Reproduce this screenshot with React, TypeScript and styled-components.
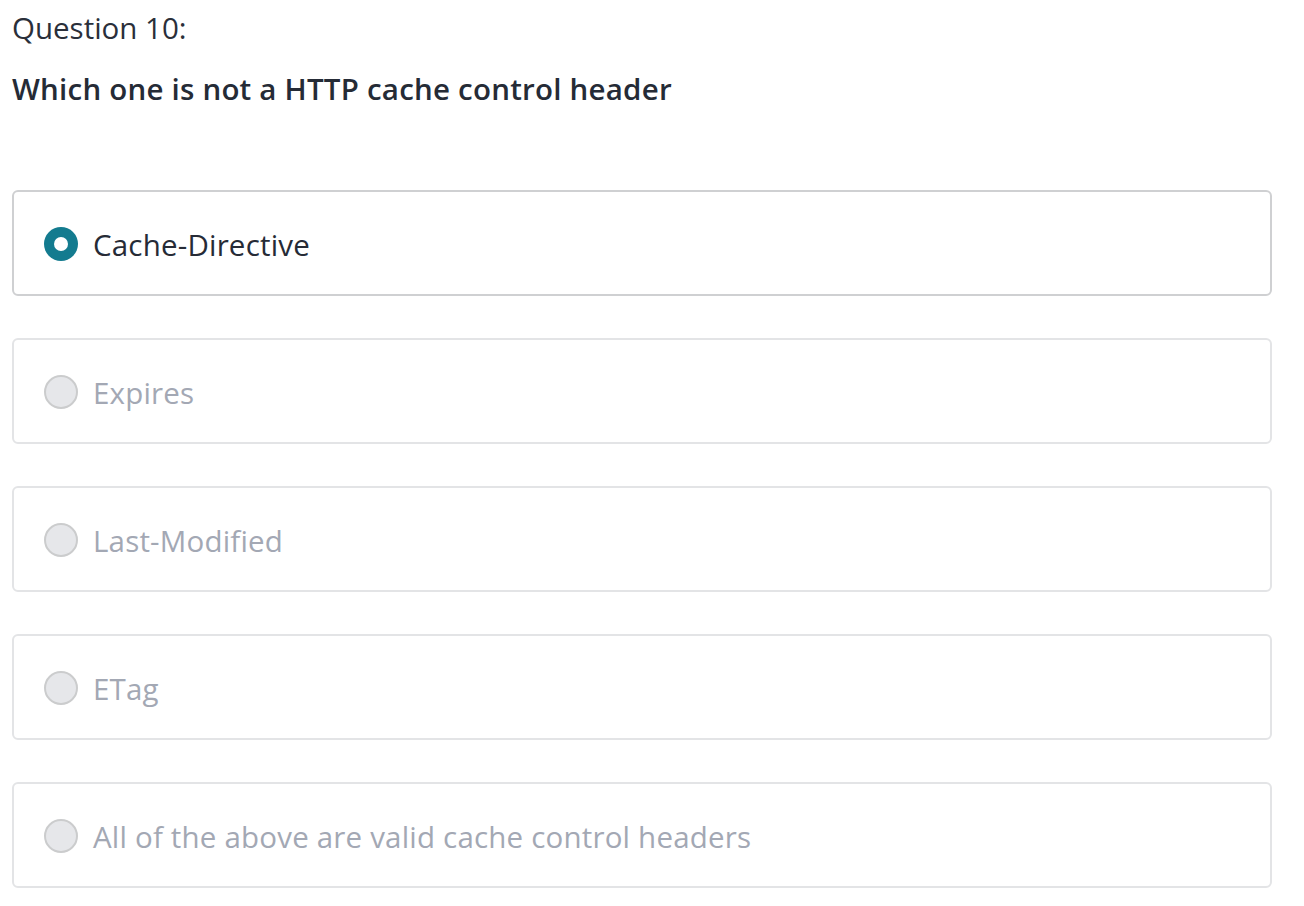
import React from "react";
import styled, { createGlobalStyle } from "styled-components";

const GlobalStyle = createGlobalStyle`
  html, body { margin: 0; padding: 0; background: #ffffff; }
  body { font-family: "Open Sans", "Noto Sans", sans-serif; }
`;

const Page = styled.div`
  width: 1260px;
  padding: 8px 0 0 12px;
  display: flex;
  flex-direction: column;
`;

const Title = styled.div`
  font-size: 29.5px;
  line-height: 40px;
  color: #2a2f3a;
  font-weight: 400;
`;

const Prompt = styled.div`
  margin-top: 21px;
  font-size: 29.5px;
  line-height: 40px;
  color: #252b36;
  font-weight: 600;
  letter-spacing: 0.22px;
`;

const Options = styled.div`
  margin-top: 81px;
  display: flex;
  flex-direction: column;
  gap: 42px;
`;

const Card = styled.label<{ $selected: boolean }>`
  box-sizing: border-box;
  height: 106px;
  border: 2px solid ${(p) => (p.$selected ? "#cfd0d2" : "#e3e4e6")};
  border-radius: 6px;
  display: flex;
  align-items: center;
  gap: 15px;
  padding: 2px 0 0 30px;
  cursor: pointer;
`;

const Radio = styled.span<{ $selected: boolean }>`
  box-sizing: border-box;
  width: 34px;
  height: 34px;
  border-radius: 50%;
  flex: none;
  display: flex;
  align-items: center;
  justify-content: center;
  background: ${(p) => (p.$selected ? "#137b8f" : "#e6e7ea")};
  border: ${(p) => (p.$selected ? "none" : "2px solid #cbcccd")};
`;

const Dot = styled.span`
  width: 14px;
  height: 14px;
  border-radius: 50%;
  background: #ffffff;
`;

const OptionText = styled.span<{ $selected: boolean }>`
  font-size: 29.5px;
  line-height: 40px;
  letter-spacing: 0.19px;
  color: ${(p) => (p.$selected ? "#262b36" : "#a3a8b4")};
  padding-top: 1px;
`;

const options = [
  "Cache-Directive",
  "Expires",
  "Last-Modified",
  "ETag",
  "All of the above are valid cache control headers",
];

export default function App() {
  const selected = 0;
  return (
    <>
      <GlobalStyle />
      <Page>
        <Title>Question 10:</Title>
        <Prompt>Which one is not a HTTP cache control header</Prompt>
        <Options>
          {options.map((o, i) => (
            <Card key={o} $selected={i === selected}>
              <Radio $selected={i === selected}>{i === selected && <Dot />}</Radio>
              <OptionText $selected={i === selected}>{o}</OptionText>
            </Card>
          ))}
        </Options>
      </Page>
    </>
  );
}
